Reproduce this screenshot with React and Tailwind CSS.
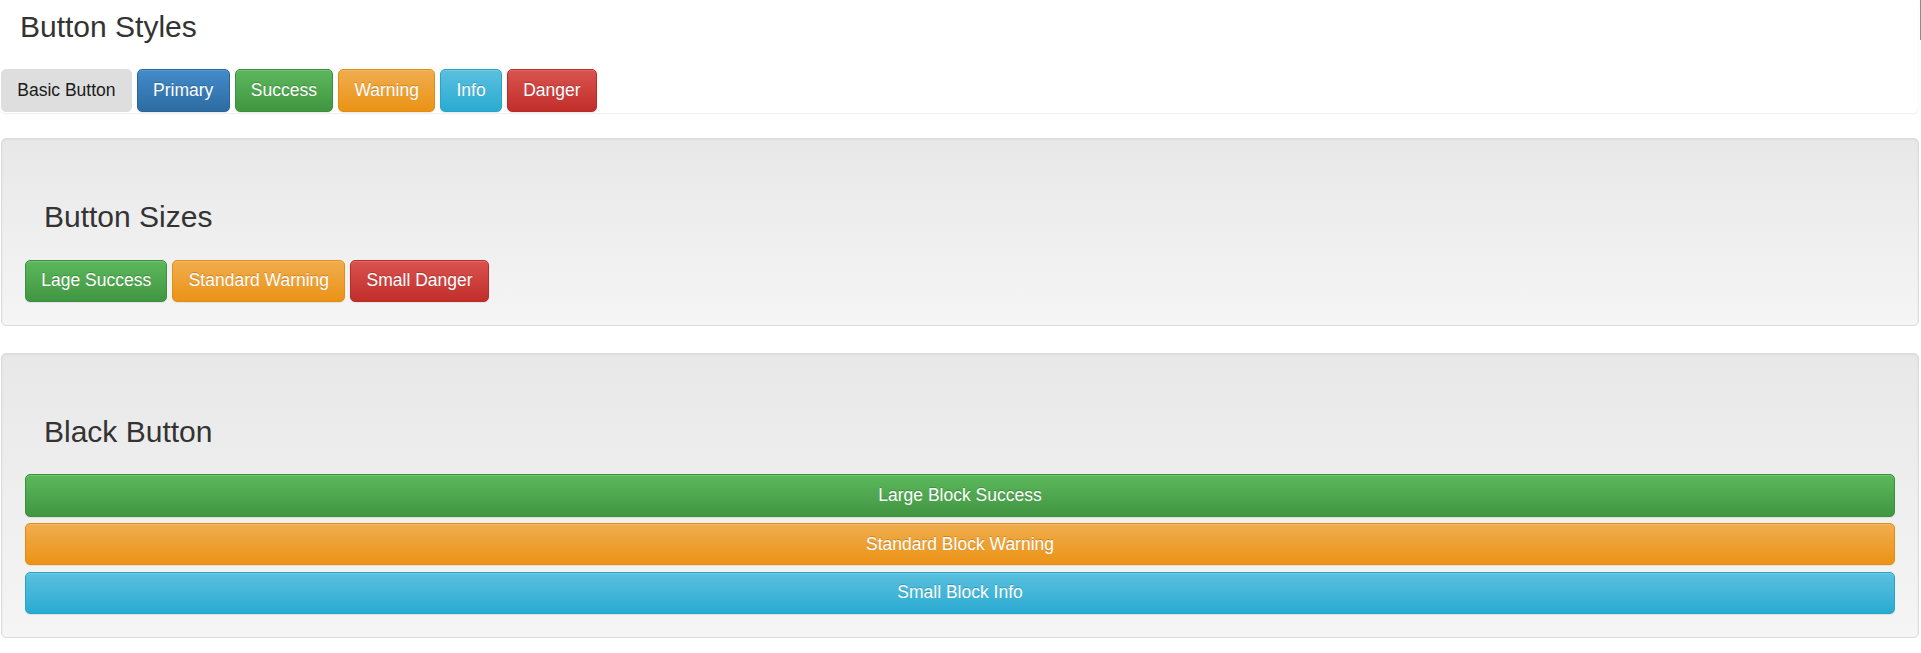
import React from "react";

const base =
  "flex h-[42.5px] items-center justify-center rounded-[5px] border px-[15.25px] text-[17.5px] leading-[25px] whitespace-nowrap";
const colored =
  "text-white [text-shadow:0_-1px_0_rgba(0,0,0,0.2)] shadow-[inset_0_1px_0_rgba(255,255,255,0.15),0_1px_1px_rgba(0,0,0,0.075)]";

const V = {
  primary: "border-[#2b669a] bg-[linear-gradient(to_bottom,#428bca,#2d6ca2)]",
  success: "border-[#3e8f3e] bg-[linear-gradient(to_bottom,#5cb85c,#419641)]",
  warning: "border-[#e38d13] bg-[linear-gradient(to_bottom,#f0ad4e,#eb9316)]",
  info: "border-[#28a4c9] bg-[linear-gradient(to_bottom,#5bc0de,#2aabd2)]",
  danger: "border-[#b92c28] bg-[linear-gradient(to_bottom,#d9534f,#c12e2a)]",
};

function Btn({ v, children, block }) {
  return (
    <button
      className={`${base} ${colored} ${V[v]} ${block ? "w-full" : ""}`}
    >
      {children}
    </button>
  );
}

function Heading({ children, className = "" }) {
  return (
    <h3
      className={`pl-[19px] text-[30px] leading-[33px] font-normal text-[#333] ${className}`}
    >
      {children}
    </h3>
  );
}

function Well({ title, children, className = "" }) {
  return (
    <div
      className={`ml-px w-[1918px] rounded-[5px] border border-[#dcdcdc] bg-[linear-gradient(to_bottom,#e8e8e8,#f5f5f5)] px-[23px] pt-[61px] pb-[23px] shadow-[inset_0_1px_3px_rgba(0,0,0,0.05)] ${className}`}
    >
      <Heading className="mb-[26.5px]">{title}</Heading>
      {children}
    </div>
  );
}

export default function App() {
  return (
    <div
      className="relative min-h-[653px] bg-white"
      style={{ fontFamily: '"Liberation Sans", Arial, Helvetica, sans-serif' }}
    >
      <div className="absolute top-0 right-0 h-[40px] w-px bg-[#8c8c8c]" />

      <div className="w-[1918px] rounded-b-[5px] bg-white pt-[10px] pb-[1.5px] pl-px shadow-[0_1px_2px_rgba(0,0,0,0.07)]">
        <Heading className="mb-[26px]">Button Styles</Heading>
        <div className="flex gap-[5px]">
          <button
            className={`${base} border-[#dedede] bg-[#dedede] text-[#1a1a1a]`}
          >
            Basic Button
          </button>
          <Btn v="primary">Primary</Btn>
          <Btn v="success">Success</Btn>
          <Btn v="warning">Warning</Btn>
          <Btn v="info">Info</Btn>
          <Btn v="danger">Danger</Btn>
        </div>
      </div>

      <Well title="Button Sizes" className="mt-[25px]">
        <div className="flex gap-[5px]">
          <Btn v="success">Lage Success</Btn>
          <Btn v="warning">Standard Warning</Btn>
          <Btn v="danger">Small Danger</Btn>
        </div>
      </Well>

      <Well title="Black Button" className="mt-[26.5px]">
        <div className="flex flex-col gap-[6.25px]">
          <Btn v="success" block>
            Large Block Success
          </Btn>
          <Btn v="warning" block>
            Standard Block Warning
          </Btn>
          <Btn v="info" block>
            Small Block Info
          </Btn>
        </div>
      </Well>
    </div>
  );
}
